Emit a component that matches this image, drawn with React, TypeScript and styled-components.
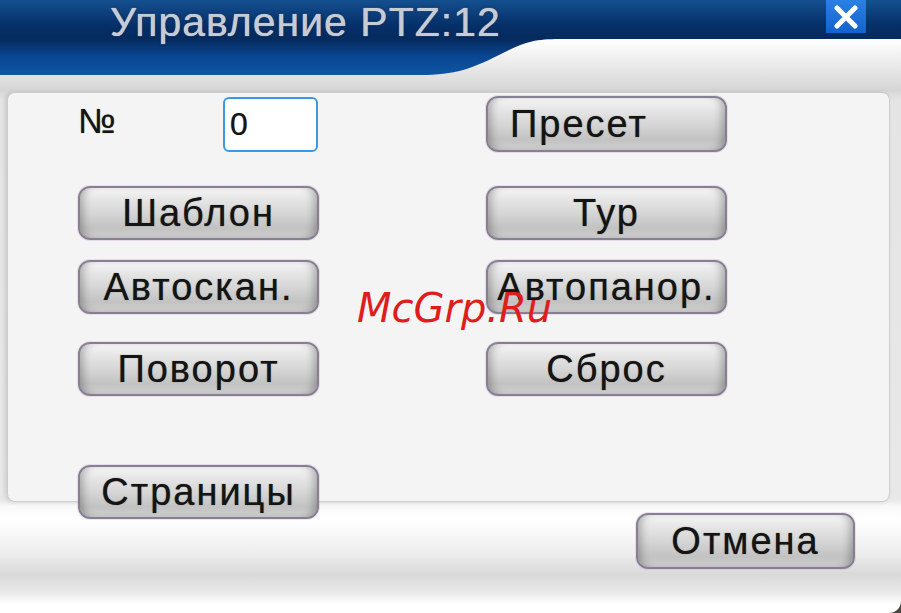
import React from 'react';
import styled, { createGlobalStyle } from 'styled-components';

const GlobalStyle = createGlobalStyle`
    html, body {
        margin: 0;
        padding: 0;
        background: #4a4642;
    }
    * { box-sizing: border-box; }
`;

const Window = styled.div`
    position: relative;
    width: 901px;
    height: 613px;
    overflow: hidden;
    border-bottom-right-radius: 12px;
    font-family: "Liberation Sans", Arial, sans-serif;
    background: linear-gradient(180deg,
        #fdfdfd 0px, #fdfdfd 42px, #e6e6e6 70px, #d6d6d6 90px,
        #e4e4e4 100px, #e8e8e8 500px, #f8f8f8 506px, #ffffff 520px,
        #ececec 556px, #d9d9d9 574px, #e8e8e8 592px, #ffffff 604px);
`;

const Header = styled.div`
    position: relative;
    height: 75px;
    display: flex;
    align-items: flex-start;
`;

const HeaderBand = styled.svg`
    position: absolute;
    inset: 0;
    width: 100%;
    height: 100%;
`;

const Title = styled.h1`
    position: relative;
    margin: 2px 0 0 110px;
    font-size: 41px;
    line-height: 41px;
    font-weight: normal;
    letter-spacing: 1px;
    color: #c6ccd6;
    text-shadow: 0 0 1px #c6ccd6, 0 0 3px rgba(0, 0, 0, 0.4);
`;

const CloseButton = styled.button`
    position: relative;
    margin: 0 35px 0 auto;
    width: 40px;
    height: 33px;
    padding: 0;
    border: none;
    background: linear-gradient(180deg, #2b80e4, #1462cc);
    display: flex;
    align-items: center;
    justify-content: center;
`;

const Panel = styled.div`
    margin: 17px 11px 0 7px;
    height: 410px;
    padding: 3px 0 0 70px;
    background: #f4f4f4;
    border: 1px solid #cdcdcd;
    border-radius: 8px;
    box-shadow: -2px 0 4px rgba(0, 0, 0, 0.12);
`;

const Row = styled.div<{ $top: number }>`
    display: grid;
    grid-template-columns: 241px 241px;
    column-gap: 167px;
    margin-top: ${p => p.$top}px;
`;

const NumberCell = styled.div`
    display: flex;
    justify-content: space-between;
    align-items: flex-start;
    padding-right: 1px;
`;

const Label = styled.span`
    margin-top: 7px;
    font-size: 35px;
    line-height: 35px;
    color: #151515;
    text-shadow: 0 0 1px rgba(0, 0, 0, 0.6);
`;

const NumberInput = styled.div`
    margin-top: 1px;
    width: 95px;
    height: 55px;
    padding-left: 5px;
    display: flex;
    align-items: center;
    font-size: 32px;
    color: #151515;
    text-shadow: 0 0 1px rgba(0, 0, 0, 0.5);
    background: #ffffff;
    border: 2px solid #3b98e2;
    border-radius: 6px;
`;

const Button = styled.button<{ $w?: number; $h?: number; $left?: boolean }>`
    width: ${p => p.$w ?? 241}px;
    height: ${p => p.$h ?? 54}px;
    padding: ${p => (p.$left ? '0 0 0 22px' : '0')};
    display: flex;
    align-items: center;
    justify-content: ${p => (p.$left ? 'flex-start' : 'center')};
    white-space: nowrap;
    font-family: "Liberation Sans", Arial, sans-serif;
    font-size: 38px;
    letter-spacing: 2px;
    color: #141414;
    text-shadow: 0 0 1px rgba(0, 0, 0, 0.6);
    border: 2px solid #858190;
    border-radius: 12px;
    background: linear-gradient(180deg,
        #f6f6f6 0%, #e6e6e6 22%, #d6d6d6 50%, #c2c2c2 80%, #cfcfcf 100%);
    box-shadow:
        inset 8px 0 8px -5px rgba(0, 0, 0, 0.28),
        inset -8px 0 8px -5px rgba(0, 0, 0, 0.28),
        0 0 0 1px rgba(200, 140, 210, 0.25);
`;

const Footer = styled.div`
    display: flex;
    justify-content: flex-end;
    padding-right: 46px;
    margin-top: 11px;
`;

const Watermark = styled.div`
    position: absolute;
    left: 357px;
    top: 288px;
    font-family: "DejaVu Sans", sans-serif;
    font-style: italic;
    font-size: 40px;
    line-height: 40px;
    color: #e01d1d;
`;

export default function App() {
    return (
        <>
            <GlobalStyle />
            <Window>
                <Header>
                    <HeaderBand viewBox="0 0 901 75" preserveAspectRatio="none">
                        <defs>
                            <linearGradient id="band" x1="0" y1="0" x2="0" y2="75" gradientUnits="userSpaceOnUse">
                                <stop offset="0" stopColor="#14508f" />
                                <stop offset="0.33" stopColor="#06306a" />
                                <stop offset="0.52" stopColor="#052a5e" />
                                <stop offset="0.75" stopColor="#0a4690" />
                                <stop offset="1" stopColor="#0e55a4" />
                            </linearGradient>
                        </defs>
                        <path
                            d="M0 0 H901 V39 H560 C 535 39, 525 42, 505 52 C 472 69, 455 75, 420 75 H0 Z"
                            fill="url(#band)"
                        />
                    </HeaderBand>
                    <Title>Управление PTZ:12</Title>
                    <CloseButton>
                        <svg width="26" height="24" viewBox="0 0 26 24">
                            <path d="M4 3 L22 21 M22 3 L4 21" stroke="#ffffff" strokeWidth="5" strokeLinecap="round" />
                        </svg>
                    </CloseButton>
                </Header>

                <Panel>
                    <Row $top={0}>
                        <NumberCell>
                            <Label>№</Label>
                            <NumberInput>0</NumberInput>
                        </NumberCell>
                        <Button $h={56} $left>Пресет</Button>
                    </Row>
                    <Row $top={34}>
                        <Button>Шаблон</Button>
                        <Button>Тур</Button>
                    </Row>
                    <Row $top={20}>
                        <Button>Автоскан.</Button>
                        <Button>Автопанор.</Button>
                    </Row>
                    <Row $top={28}>
                        <Button>Поворот</Button>
                        <Button>Сброс</Button>
                    </Row>
                    <Row $top={69}>
                        <Button>Страницы</Button>
                    </Row>
                </Panel>

                <Footer>
                    <Button $w={219} $h={56}>Отмена</Button>
                </Footer>

                <Watermark>McGrp.Ru</Watermark>
            </Window>
        </>
    );
}
